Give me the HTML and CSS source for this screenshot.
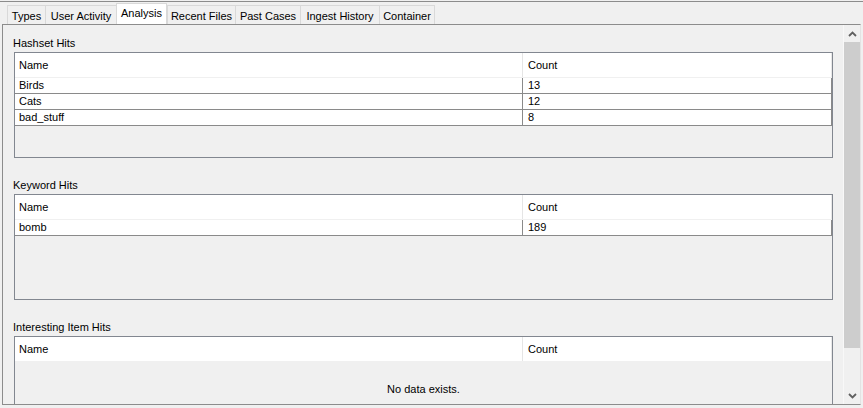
FILE: index.html
```html
<!DOCTYPE html>
<html>
<head>
<meta charset="utf-8">
<link rel="stylesheet" href="styles.css">
</head>
<body>
<div class="window">
  <div class="tabs">
    <div class="tab tab-types">Types</div>
    <div class="tab tab-user">User Activity</div>
    <div class="tab tab-analysis selected">Analysis</div>
    <div class="tab tab-recent">Recent Files</div>
    <div class="tab tab-past">Past Cases</div>
    <div class="tab tab-ingest">Ingest History</div>
    <div class="tab tab-container last">Container</div>
  </div>
  <div class="panel">
    <div class="viewport">
      <section class="section">
        <div class="label">Hashset Hits</div>
        <div class="table">
          <div class="thead">
            <div class="th th-name">Name</div>
            <div class="th th-count">Count</div>
          </div>
          <div class="row"><div class="td td-name">Birds</div><div class="td td-count">13</div></div>
          <div class="row"><div class="td td-name">Cats</div><div class="td td-count">12</div></div>
          <div class="row"><div class="td td-name">bad_stuff</div><div class="td td-count">8</div></div>
        </div>
      </section>
      <section class="section">
        <div class="label">Keyword Hits</div>
        <div class="table">
          <div class="thead">
            <div class="th th-name">Name</div>
            <div class="th th-count">Count</div>
          </div>
          <div class="row"><div class="td td-name">bomb</div><div class="td td-count">189</div></div>
        </div>
      </section>
      <section class="section">
        <div class="label">Interesting Item Hits</div>
        <div class="table">
          <div class="thead">
            <div class="th th-name">Name</div>
            <div class="th th-count">Count</div>
          </div>
          <div class="empty">No data exists.</div>
        </div>
      </section>
    </div>
    <div class="scrollbar">
      <div class="arrow">
        <svg width="9" height="6" viewBox="0 0 9 6"><polyline points="1,5 4.5,1.5 8,5" fill="none" stroke="#606060" stroke-width="1.8"/></svg>
      </div>
      <div class="thumb"></div>
      <div class="track"></div>
      <div class="arrow">
        <svg width="9" height="6" viewBox="0 0 9 6"><polyline points="1,1 4.5,4.5 8,1" fill="none" stroke="#606060" stroke-width="1.8"/></svg>
      </div>
    </div>
  </div>
</div>
</body>
</html>
```

FILE: styles.css
```css
* {
  box-sizing: border-box;
}

html, body {
  margin: 0;
  padding: 0;
  background: #f0f0f0;
}

body {
  padding-top: 1px;
  font-family: "Liberation Sans", Arial, sans-serif;
  font-size: 11px;
  color: #000;
  width: 863px;
  height: 408px;
  overflow: hidden;
}

.window {
  border-top: 1px solid #8c8c8c;
  display: flex;
  flex-direction: column;
}

.tabs {
  height: 22px;
  display: flex;
  align-items: flex-end;
  padding-left: 7px;
}

.tab {
  height: 19px;
  line-height: 18px;
  padding-top: 1px;
  text-align: center;
  white-space: nowrap;
  border-top: 1px solid #d9d9d9;
  border-left: 1px solid #d9d9d9;
  background: #f0f0f0;
}

.tab.last {
  border-right: 1px solid #d9d9d9;
}

.tab.selected {
  height: 21px;
  line-height: 18px;
  padding-top: 0;
  background: #fff;
  border: 1px solid #d9d9d9;
  border-bottom: none;
  position: relative;
  z-index: 1;
}

.tab-types { width: 38px; }
.tab-user { width: 71px; }
.tab-analysis { width: 51px; }
.tab-recent { width: 68px; }
.tab-past { width: 65px; }
.tab-ingest { width: 79px; }
.tab-container { width: 56px; }

.panel {
  margin-left: 2px;
  width: 859px;
  height: 381px;
  border-top: 1px solid #8c8c8c;
  border-left: 1px solid #8c8c8c;
  border-bottom: 1px solid #8c8c8c;
  border-right: 1px solid #e3e3e3;
  display: flex;
  background: #f0f0f0;
}

.viewport {
  width: 840px;
  height: 100%;
  overflow: hidden;
  padding: 11px 10px 0 10px;
}

.section {
  margin-bottom: 20px;
}

.label {
  height: 14px;
  line-height: 14px;
  margin-bottom: 2px;
  white-space: nowrap;
}

.table {
  margin-left: 1px;
  height: 106px;
  border: 1px solid #828790;
  background: #f0f0f0;
  position: relative;
  overflow: hidden;
}

.thead {
  display: grid;
  grid-template-columns: 508px 309px;
  height: 25px;
  background: #fff;
  border-bottom: 1px solid #f0f0f0;
}

.th {
  line-height: 23px;
  padding-top: 1px;
  white-space: nowrap;
}

.th-name {
  padding-left: 4px;
  border-right: 1px solid #e5e5e5;
}

.th-count {
  padding-left: 5px;
  border-right: 1px solid #e8e8e8;
}

.row {
  display: grid;
  grid-template-columns: 508px 309px;
  height: 16px;
  background: #fff;
  border-bottom: 1px solid #8a8a8a;
}

.td {
  line-height: 15px;
  white-space: nowrap;
}

.td-name {
  padding-left: 4px;
  border-right: 1px solid #8a8a8a;
}

.td-count {
  padding-left: 5px;
  border-right: 1px solid #8a8a8a;
}

.empty {
  position: absolute;
  inset: 0;
  display: flex;
  align-items: center;
  justify-content: center;
}

.scrollbar {
  width: 17px;
  height: 100%;
  display: flex;
  flex-direction: column;
  background: #f0f0f0;
  border-left: 1px solid #f8f8f8;
}

.arrow {
  height: 17px;
  display: flex;
  align-items: center;
  justify-content: center;
}

.thumb {
  height: 306px;
  background: #cdcdcd;
}

.track {
  flex: 1;
}
```
